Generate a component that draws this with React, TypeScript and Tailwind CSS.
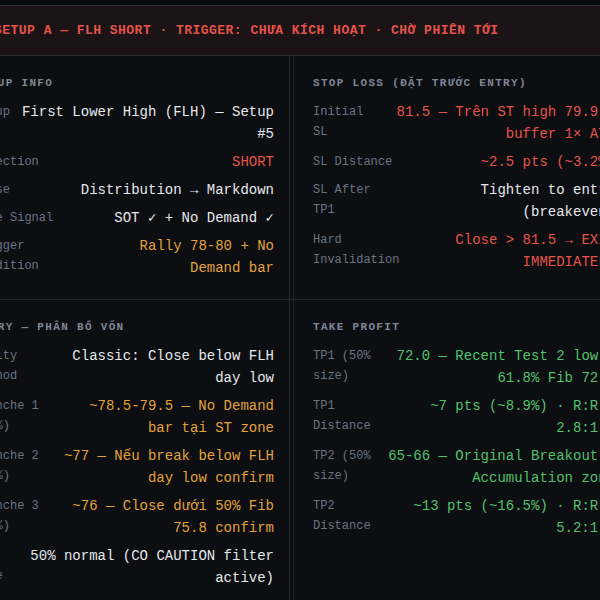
import React from 'react'

type Tone = 'white' | 'red' | 'amber' | 'green'

type Item = {
  label: string
  value: string
  tone: Tone
}

const toneClass: Record<Tone, string> = {
  white: 'text-[#e6e8ec]',
  red: 'text-[#e5534b]',
  amber: 'text-[#e3a33b]',
  green: 'text-[#52c16c]',
}

const setupInfo: Item[] = [
  { label: 'Setup', value: 'First Lower High (FLH) — Setup #5', tone: 'white' },
  { label: 'Direction', value: 'SHORT', tone: 'red' },
  { label: 'Phase', value: 'Distribution → Markdown', tone: 'white' },
  { label: 'Core Signal', value: 'SOT ✓ + No Demand ✓', tone: 'white' },
  { label: 'Trigger Condition', value: 'Rally 78-80 + No Demand bar', tone: 'amber' },
]

const stopLoss: Item[] = [
  { label: 'Initial SL', value: '81.5 — Trên ST high 79.9 + buffer 1× ATR', tone: 'red' },
  { label: 'SL Distance', value: '~2.5 pts (~3.2%)', tone: 'red' },
  { label: 'SL After TP1', value: 'Tighten to entry (breakeven)', tone: 'white' },
  { label: 'Hard Invalidation', value: 'Close > 81.5 → EXIT IMMEDIATELY', tone: 'red' },
]

const entry: Item[] = [
  { label: 'Equity Method', value: 'Classic: Close below FLH day low', tone: 'white' },
  { label: 'Tranche 1 (40%)', value: '~78.5-79.5 — No Demand bar tại ST zone', tone: 'amber' },
  { label: 'Tranche 2 (30%)', value: '~77 — Nếu break below FLH day low confirm', tone: 'amber' },
  { label: 'Tranche 3 (30%)', value: '~76 — Close dưới 50% Fib 75.8 confirm', tone: 'amber' },
  { label: 'Pos Size', value: '50% normal (CO CAUTION filter active)', tone: 'white' },
]

const takeProfit: Item[] = [
  { label: 'TP1 (50% size)', value: '72.0 — Recent Test 2 low + 61.8% Fib 72.3', tone: 'green' },
  { label: 'TP1 Distance', value: '~7 pts (~8.9%) · R:R ≈ 2.8:1 ✓', tone: 'green' },
  { label: 'TP2 (50% size)', value: '65-66 — Original Breakout + Accumulation zone', tone: 'green' },
  { label: 'TP2 Distance', value: '~13 pts (~16.5%) · R:R ≈ 5.2:1 ✓', tone: 'green' },
]

function Panel({ title, items, gap }: { title: string; items: Item[]; gap: string }) {
  return (
    <div>
      <h3 className="text-[11px] leading-4 font-bold tracking-[0.12em] text-[#7f8796] mb-[10px]">
        {title}
      </h3>
      <div className="flex flex-col gap-[6px]">
        {items.map(item => (
          <div key={item.label} className={`flex justify-between ${gap}`}>
            <div className="text-[12px] leading-5 pt-px text-[#6b7383]">{item.label}</div>
            <div className={`text-right text-[14px] leading-[22px] ${toneClass[item.tone]}`}>
              {item.value}
            </div>
          </div>
        ))}
      </div>
    </div>
  )
}

export default function App() {
  return (
    <div
      className="w-[600px] h-[600px] overflow-hidden bg-[#0c0e12]"
      style={{ fontFamily: '"Liberation Mono", "DejaVu Sans Mono", monospace' }}
    >
      <div className="ml-[-48px] w-[700px] pt-[5px] bg-[#090b0e]">
        <div className="h-[51px] flex items-center pl-[42px] border-y border-[#2a2d33] bg-[#1b1315]">
          <span className="text-[13px] font-bold tracking-[0.47px] text-[#e5534b] whitespace-nowrap">
            SETUP A — FLH SHORT · TRIGGER: CHƯA KÍCH HOẠT · CHỜ PHIÊN TỚI
          </span>
        </div>

        <div className="bg-[#0c0e12]">
          <div className="flex h-[244px] border-b border-[#23272e]">
            <div className="w-[338px] pl-[22px] pr-[15px] pt-[19px] border-r border-[#262a31]">
              <Panel title="SETUP INFO" items={setupInfo} gap="gap-[10px]" />
            </div>
            <div className="w-[3px]" />
            <div className="w-[337px] pl-[19px] pr-[15px] pt-[19px] border-l border-[#1e2228]">
              <Panel title="STOP LOSS (ĐẶT TRƯỚC ENTRY)" items={stopLoss} gap="gap-3" />
            </div>
          </div>

          <div className="flex h-[300px]">
            <div className="w-[338px] pl-[22px] pr-[15px] pt-[19px] border-r border-[#262a31]">
              <Panel title="ENTRY — PHÂN BỔ VỐN" items={entry} gap="gap-[10px]" />
            </div>
            <div className="w-[3px]" />
            <div className="w-[337px] pl-[19px] pr-[15px] pt-[19px] border-l border-[#1e2228]">
              <Panel title="TAKE PROFIT" items={takeProfit} gap="gap-3" />
            </div>
          </div>
        </div>
      </div>
    </div>
  )
}
